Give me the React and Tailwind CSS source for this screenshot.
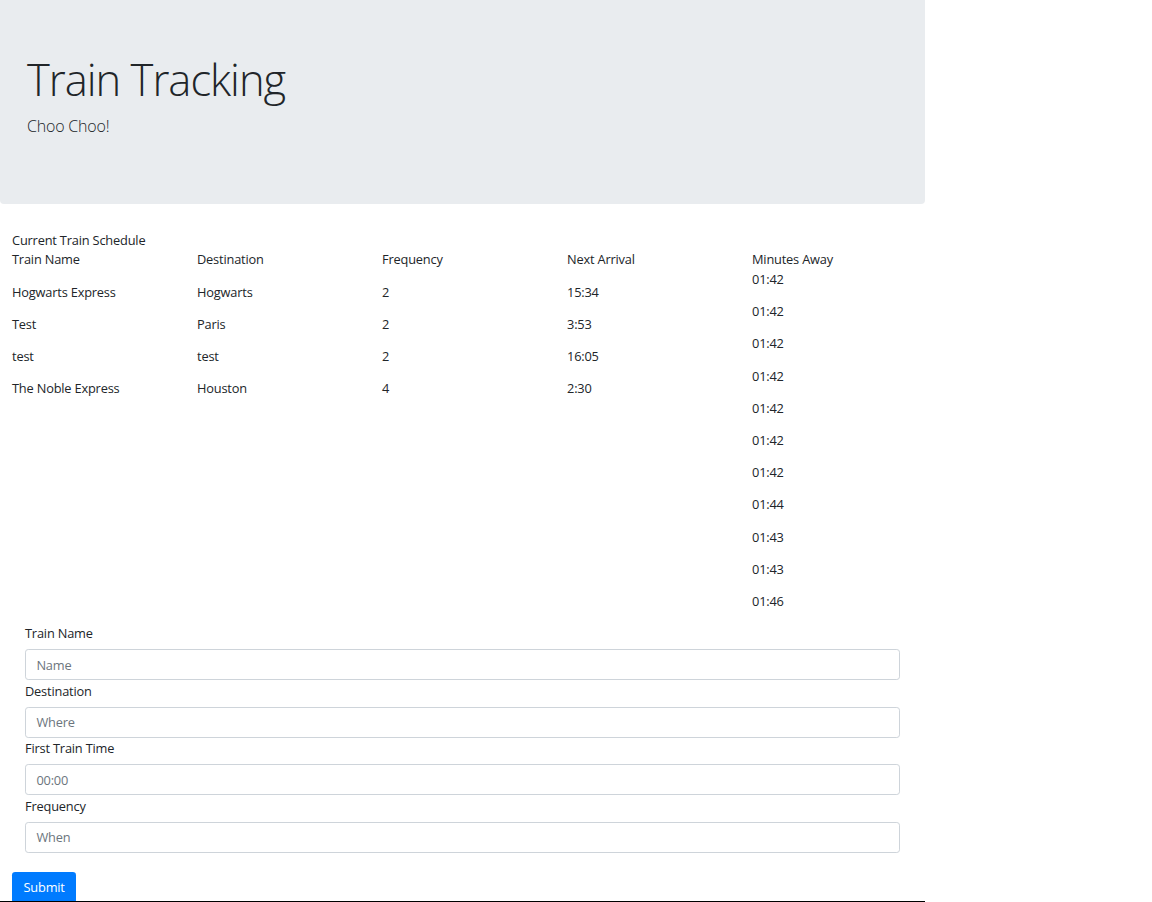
import React from "react";

const trains = [
  ["Hogwarts Express", "Hogwarts", "2", "15:34"],
  ["Test", "Paris", "2", "3:53"],
  ["test", "test", "2", "16:05"],
  ["The Noble Express", "Houston", "4", "2:30"],
];
const minutes = ["01:42","01:42","01:42","01:42","01:42","01:42","01:42","01:44","01:43","01:43","01:46"];

function Field({ label, placeholder }) {
  return (
    <div className="mb-[1.3px]">
      <label className="block h-[19.2px] leading-[19.2px] mb-[6px]">{label}</label>
      <input
        className="block w-full h-[31px] border border-[#ced4da] rounded-[3.2px] px-[10.4px] text-[12.8px] text-[#495057] placeholder:text-[#6c757d] bg-white outline-none"
        placeholder={placeholder}
      />
    </div>
  );
}

export default function App() {
  return (
    <div
      className="w-[925px] text-[#212529] text-[12.8px] leading-[19.2px] tracking-[-0.18px] bg-white"
      style={{ fontFamily: '"Open Sans", "Noto Sans", sans-serif' }}
    >
      <div className="bg-[#e9ecef] h-[204px] rounded-b-[4px] px-[27px] pt-[54px] mb-[27px]">
        <h1 className="text-[43.5px] font-light leading-[52px] tracking-[-1px]">Train Tracking</h1>
        <p className="text-[16px] font-light leading-[24px] mt-[8px] tracking-[-0.2px]">Choo Choo!</p>
      </div>

      <div className="px-[12px] h-[19.2px]">Current Train Schedule</div>
      <div className="grid grid-cols-5">
        {[0, 1, 2, 3].map((c) => (
          <div key={c} className="px-[12px]">
            <p className="mb-[13.8px]">{["Train Name", "Destination", "Frequency", "Next Arrival"][c]}</p>
            {trains.map((t, i) => (
              <p key={i} className="mb-[12.9px]">{t[c]}</p>
            ))}
          </div>
        ))}
        <div className="px-[12px]">
          <p className="mb-[0.6px]">Minutes Away</p>
          {minutes.map((m, i) => (
            <p key={i} className="mb-[13px]">{m}</p>
          ))}
        </div>
      </div>

      <form className="px-[25px]">
        <Field label="Train Name" placeholder="Name" />
        <Field label="Destination" placeholder="Where" />
        <Field label="First Train Time" placeholder="00:00" />
        <Field label="Frequency" placeholder="When" />
      </form>
      <div className="px-[12px] pt-[17.5px] h-[46.5px] overflow-hidden">
        <button className="bg-[#007bff] text-white rounded-[3.2px] h-[31px] px-[11.5px] text-[12.8px] leading-[19.2px]">
          Submit
        </button>
      </div>
      <div className="h-px bg-black" />
    </div>
  );
}
